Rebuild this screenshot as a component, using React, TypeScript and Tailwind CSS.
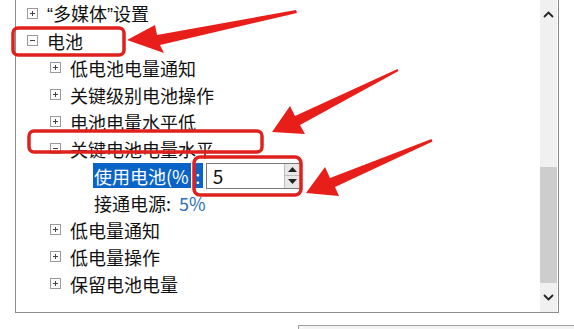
import React from "react";

function Box({ open }: { open?: boolean }) {
  return (
    <span className="relative inline-block w-[11px] h-[11px] border border-[#9a9a9a] bg-white shrink-0">
      <span className="absolute left-[2px] right-[2px] top-[4px] h-px bg-[#444]" />
      {!open && <span className="absolute top-[2px] bottom-[2px] left-[4px] w-px bg-[#444]" />}
    </span>
  );
}

function Row({ indent, open, children }: { indent: number; open?: boolean; children: React.ReactNode }) {
  return (
    <div className="flex items-center h-[27px] gap-[9px]" style={{ paddingLeft: indent }}>
      <Box open={open} />
      <span>{children}</span>
    </div>
  );
}

export default function App() {
  return (
    <div
      className="relative w-[574px] h-[329px] bg-white overflow-hidden text-[18px] text-[#111] leading-none"
      style={{ fontFamily: '"Noto Sans CJK SC", "Noto Sans", sans-serif' }}
    >
      <div className="ml-[15px] w-[544px] h-[313px] border-l border-r border-b border-[#8c8c8c] flex">
        <div className="flex-1 pt-0">
          <Row indent={11}>
            <span style={{ fontFamily: '"Liberation Sans", sans-serif' }}>“</span>多媒体
            <span style={{ fontFamily: '"Liberation Sans", sans-serif' }}>”</span>设置
          </Row>
          <Row indent={11} open>
            电池
          </Row>
          <Row indent={34}>低电池电量通知</Row>
          <Row indent={34}>关键级别电池操作</Row>
          <Row indent={34}>电池电量水平低</Row>
          <Row indent={34} open>
            关键电池电量水平
          </Row>
          <div className="flex items-center h-[27px] pl-[77px]">
            <span className="bg-[#0a64c8] text-white h-[25px] flex items-center pl-[1px] pr-[2px]">使用电池(%</span>
            <span className="ml-[2px] bg-[#0a64c8] text-white h-[25px] w-[10px] flex items-center justify-center">:</span>
            <div className="ml-[3px] flex h-[26px] border border-[#7a7a7a]">
              <div className="w-[77px] flex items-center pl-[6px] text-[19px]">5</div>
              <div className="w-[16px] flex flex-col border-l border-[#bcbcbc] bg-[#e8e8e8]">
                <div className="flex-1 flex items-center justify-center border-b border-[#bcbcbc]">
                  <svg width="9" height="5" viewBox="0 0 9 5"><path d="M0 5 L4.5 0 L9 5 Z" fill="#222" /></svg>
                </div>
                <div className="flex-1 flex items-center justify-center">
                  <svg width="9" height="5" viewBox="0 0 9 5"><path d="M0 0 L4.5 5 L9 0 Z" fill="#222" /></svg>
                </div>
              </div>
            </div>
          </div>
          <div className="flex items-center h-[27px] pl-[78px]">
            <span>接通电源:</span>
            <span className="ml-[8px] text-[#2a6fb5]">5%</span>
          </div>
          <Row indent={34}>低电量通知</Row>
          <Row indent={34}>低电量操作</Row>
          <Row indent={34}>保留电池电量</Row>
        </div>
        <div className="w-[17px] bg-[#f0f0f0] flex flex-col items-center mr-px">
          <div className="h-[28px] flex items-center justify-center">
            <svg width="11" height="7" viewBox="0 0 11 7"><path d="M1 6 L5.5 1.5 L10 6" stroke="#222" strokeWidth="1.8" fill="none" /></svg>
          </div>
          <div className="mt-[139px] w-full h-[116px] bg-[#cdcdcd]" />
          <div className="flex-1 flex items-center justify-center">
            <svg width="11" height="7" viewBox="0 0 11 7"><path d="M1 1 L5.5 5.5 L10 1" stroke="#222" strokeWidth="1.8" fill="none" /></svg>
          </div>
        </div>
      </div>
      <div className="ml-[298px] mt-[12px] w-[300px] h-[10px] border border-[#a0a0a0] bg-[#f4f4f4]" />

      <svg className="absolute inset-0 pointer-events-none" width="574" height="329" viewBox="0 0 574 329">
        <rect x="13" y="28" width="111" height="27" rx="5" fill="none" stroke="#e0201c" strokeWidth="3.5" />
        <rect x="29" y="131" width="233" height="21" rx="5" fill="none" stroke="#e0201c" strokeWidth="3.5" />
        <rect x="194" y="157" width="107" height="38" rx="6" fill="none" stroke="#e0201c" strokeWidth="3.5" />
        <path d="M296 10 L297 13 L160 45 L164 53 L127 40 L155 25 L157 35 Z" fill="#e81e1a" />
        <path d="M397.5 69 L398.5 71 L300 125 L305 134 L272 132 L290 106 L295 116 Z" fill="#e81e1a" />
        <path d="M431.5 139 L432.5 141.5 L335 187 L339 196 L306 193 L325 167 L330 178 Z" fill="#e81e1a" />
      </svg>
    </div>
  );
}
